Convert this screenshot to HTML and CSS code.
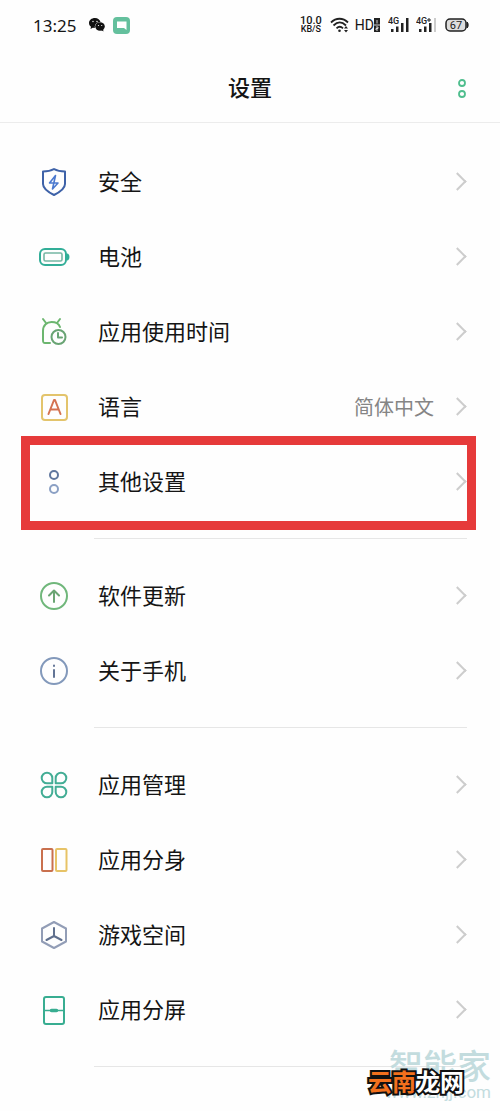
FILE: index.html
```html
<!DOCTYPE html>
<html lang="zh-CN">
<head>
<meta charset="utf-8">
<meta name="viewport" content="width=device-width, initial-scale=1">
<title>设置</title>
<link rel="stylesheet" href="styles.css">
</head>
<body>
<div class="status">
  <span class="clock">13:25</span>
  <svg class="wechat" width="16" height="14" viewBox="0 0 16 14"><path d="M6 0C2.500 0 0 2.200 0 5c0 1.600.8 2.900 2 3.800L1.500 11l2.300-1.300 2 .3C5.500 6 8 4 11.500 4 11 1.700 8.800 0 6 0Z" fill="#111"/><ellipse cx="11" cy="8.500" rx="4.800" ry="4.200" fill="#111"/><path d="m12 12 2.500 1.500L14 11Z" fill="#111"/><g fill="#fff"><circle cx="4" cy="3.500" r=".7"/><circle cx="8" cy="3.500" r=".7"/><circle cx="9.500" cy="7.500" r=".6"/><circle cx="12.700" cy="7.500" r=".6"/></g></svg>
  <svg class="chat" width="17" height="17" viewBox="0 0 17 17"><rect width="17" height="17" rx="4" fill="#64c09d"/><path d="M4 4.500h9.500v8.500l-2.500-2H4Z" fill="#fff"/></svg>
  <span class="speed"><span>10.0</span><span class="unit">KB/S</span></span>
  <svg class="wifi" width="20" height="16" viewBox="0 0 20 16" fill="none" stroke="#222" stroke-width="1.800"><path d="M1 5.500c5-5 12-5 17 0M3.500 8.500c4-4 8.500-4 12.500 0M6.500 11.300c2-2 4.500-2 6.500 0"/><circle cx="9.500" cy="13.800" r="1.300" fill="#222" stroke="none"/><path d="m14 11.500 2-2.500 2 2.500Zm0 1.500 2 2.500 2-2.500Z" fill="#222" stroke="none"/></svg>
  <span class="hd">HD</span>
  <svg class="sim" width="6" height="14" viewBox="0 0 6 14"><path d="M0 0h6v14H0Z" fill="#222"/><path d="M3 2v3.500M2 9h2v1.500H2V12h2M0 7h6" stroke="#fff" stroke-width=".8" fill="none"/></svg>
  <svg class="signal" width="22" height="16" viewBox="0 0 22 16"><text x="0" y="7" class="net">4G</text><path d="M3 12h2.500v3H3Zm5-2.500h2.500V15H8ZM13 6h2.500v9H13Zm5-5h2.500v14H18Z" fill="#222"/></svg>
  <svg class="signal2" width="22" height="16" viewBox="0 0 22 16"><text x="0" y="7" class="net">4G</text><path d="M3 12h2.500v3H3Zm5-2.500h2.500V15H8ZM13 6h2.500v9H13Z" fill="#222"/><path d="M11 3h4M13 1v4" stroke="#222"/><path d="M18 1h2v14h-2Z" fill="#ccc"/></svg>
  <svg class="power" width="24" height="14" viewBox="0 0 24 14"><rect x="1" y="1" width="20" height="12" rx="4" fill="#ddd" stroke="#222" stroke-width="1.500"/><path d="M22 4c1.500.5 1.500 5.500 0 6Z" fill="#222" stroke="#222"/><text x="11" y="11" text-anchor="middle" class="pct">67</text></svg>
</div>
<header class="header">
  <h1>设置</h1>
  <button class="more" aria-label="更多"><svg width="12" height="22" viewBox="0 0 12 22" fill="none" stroke="#4fbe8e" stroke-width="1.800"><circle cx="6" cy="5" r="3"/><circle cx="6" cy="16" r="3"/></svg></button>
</header>
<main>
  <nav class="group">
    <a class="row" href="#"><svg class="icon" viewBox="0 0 32 32" stroke="#3e62a8"><path d="M16 3c3.500 2 7 2.500 11 2.500V18c0 5-5 8-11 11C10 26 5 23 5 18V5.500C9 5.500 12.500 5 16 3Z"/><path d="M17.500 9.500 11.500 17H20l-5.500 6 3-13.500" stroke="#4b79cf" stroke-width="1.600"/></svg><span>安全</span><i class="arrow"></i></a>
    <a class="row" href="#"><svg class="icon" viewBox="0 0 32 32" stroke="#32ae98"><rect x="2" y="8" width="26" height="16" rx="5"/><rect x="6" y="12" width="18" height="8" rx="1.500" stroke="#76b6a4" stroke-width="1.600"/><path d="M29.500 13.500c1.300 1 1.300 4 0 5Z"/></svg><span>电池</span><i class="arrow"></i></a>
    <a class="row" href="#"><svg class="icon" viewBox="0 0 32 32" stroke="#6cb66f"><path d="M12 27H7c-2 0-2-1-2-3v-9C5 9 9 6 13.500 6S21 8 22 11M5 3l3 4M22 3l-3 4"/><circle cx="20.500" cy="21" r="7" stroke="#69a474"/><path d="M20 17v4.500h4" stroke="#69a474"/></svg><span>应用使用时间</span><i class="arrow"></i></a>
    <a class="row" href="#"><svg class="icon" viewBox="0 0 32 32" stroke="#e3c46c"><rect x="4" y="4" width="25" height="25" rx="3"/><path d="m10.500 23 5.500-14h1l5.500 14M12.500 18.500h8" stroke="#d47352"/></svg><span>语言</span><span class="value">简体中文</span><i class="arrow"></i></a>
    <a class="row marked" href="#"><svg class="icon" viewBox="0 0 32 32" stroke="#60779e"><circle cx="16" cy="9" r="4"/><circle cx="16" cy="23" r="4" stroke="#8ba0c4"/></svg><span>其他设置</span><i class="arrow"></i></a>
  </nav>
  <nav class="group">
    <a class="row" href="#"><svg class="icon" viewBox="0 0 32 32" stroke="#70b77b"><circle cx="16" cy="16" r="13"/><path d="M16 22V10.500m-5 5 5-5 5 5" stroke="#6aa573"/></svg><span>软件更新</span><i class="arrow"></i></a>
    <a class="row" href="#"><svg class="icon" viewBox="0 0 32 32" stroke="#8399bb"><circle cx="16" cy="16" r="13"/><path d="M16 15v7M16 10.500v.5" stroke="#627495"/></svg><span>关于手机</span><i class="arrow"></i></a>
  </nav>
  <nav class="group">
    <a class="row" href="#"><svg class="icon" viewBox="0 0 32 32" stroke="#43ad95"><path d="M14.300 14.300V9A5.300 5.300 0 1 0 9 14.300ZM17.700 14.300V9a5.300 5.300 0 1 1 5.300 5.300ZM14.300 17.700V23A5.300 5.300 0 1 1 9 17.700ZM17.700 17.700V23a5.300 5.300 0 1 0 5.300-5.300Z"/></svg><span>应用管理</span><i class="arrow"></i></a>
    <a class="row" href="#"><svg class="icon" viewBox="0 0 32 32" stroke="#c9704e"><rect x="4" y="5" width="10.500" height="22" rx="1"/><rect x="18" y="5" width="10.500" height="22" rx="1" stroke="#e7c367"/></svg><span>应用分身</span><i class="arrow"></i></a>
    <a class="row" href="#"><svg class="icon" viewBox="0 0 32 32" stroke="#929db6"><path d="m16 3 12 6.500v13L16 29 4 22.500v-13Z"/><path d="M16 9v8M8.500 21l7.500-4 7.500 4" stroke="#60708e"/></svg><span>游戏空间</span><i class="arrow"></i></a>
    <a class="row" href="#"><svg class="icon" viewBox="0 0 32 32" stroke="#38ad91"><rect x="6" y="3" width="20" height="27" rx="2"/><path d="M6 16.500h20" stroke-width="1.500"/><path d="M13.500 16.500h5" stroke-width="3.500"/></svg><span>应用分屏</span><i class="arrow"></i></a>
  </nav>
</main>
<div class="watermark"><span class="brand">智能家</span><span class="site">www.znjj.com</span></div>
<div class="stamp"><span>云南</span>龙网</div>
</body>
</html>
```
FILE: styles.css
```css
* { box-sizing: border-box; }
body { margin: 0; position: relative; min-height: 100vh; background: #fefefe; color: #151515; font-family: Roboto, "Noto Sans CJK SC", sans-serif; }
.status { display: flex; align-items: center; height: 52px; padding: 0 31px 2px 33px; }
.clock { font: 17px "Noto Sans", sans-serif; margin-right: 13px; }
.wechat { margin-right: 8px; }
.speed { display: flex; flex-direction: column; align-items: center; margin-left: auto; margin-right: 8px; font-size: 11px; line-height: 9px; font-weight: 500; }
.unit { font-size: 9px; }
.wifi { margin-right: 5px; }
.hd { font-size: 14px; }
.sim { margin-right: 8px; }
.signal { margin-right: 6px; }
.signal2 { margin-right: 7px; }
.net { font: 500 9px Roboto, sans-serif; fill: #222; }
.pct { font: 11px Roboto, sans-serif; fill: #222; }
.header { position: relative; display: flex; align-items: center; justify-content: center; height: 71px; padding-top: 3px; border-bottom: 1px solid #ececec; }
h1 { margin: 0; font-size: 22px; line-height: 32px; font-weight: 500; }
.more { position: absolute; right: 32px; padding: 0; border: 0; background: none; display: flex; }
main { padding-top: 22px; }
.group::after { content: ""; display: block; height: 1px; margin: 18px 33px 20px 94px; background: #e6e6e6; }
.group:last-child::after { margin-bottom: 0; }
.row { position: relative; display: flex; align-items: center; height: 75px; padding: 0 36px 2px 38px; color: inherit; text-decoration: none; font-size: 22px; line-height: 32px; }
.row span { padding-top: 2px; }
.icon { width: 32px; height: 32px; margin-right: 28px; fill: none; stroke-width: 2; stroke-linecap: round; stroke-linejoin: round; }
.arrow { width: 13px; height: 13px; margin-left: auto; border: solid #cdcdcd; border-width: 2px 2px 0 0; transform: rotate(45deg); }
.row .value { margin-left: auto; color: #858585; font-size: 20px; }
.value + .arrow { margin-left: 17px; }
.marked::after { content: ""; position: absolute; inset: -9px 24px -10px 21px; border: 9px solid #e63a3a; }
.watermark { position: absolute; right: 9px; bottom: 11px; display: flex; flex-direction: column; align-items: flex-end; color: #c3dcde; }
.brand { font-size: 34px; line-height: 34px; font-weight: 500; }
.site { font-size: 17px; line-height: 16px; }
.stamp { position: absolute; right: 36px; bottom: 11px; color: #fff; font-size: 24px; line-height: 34px; font-weight: 700; -webkit-text-stroke: 4px #111; paint-order: stroke fill; }
.stamp span { color: #f2701d; }
```
